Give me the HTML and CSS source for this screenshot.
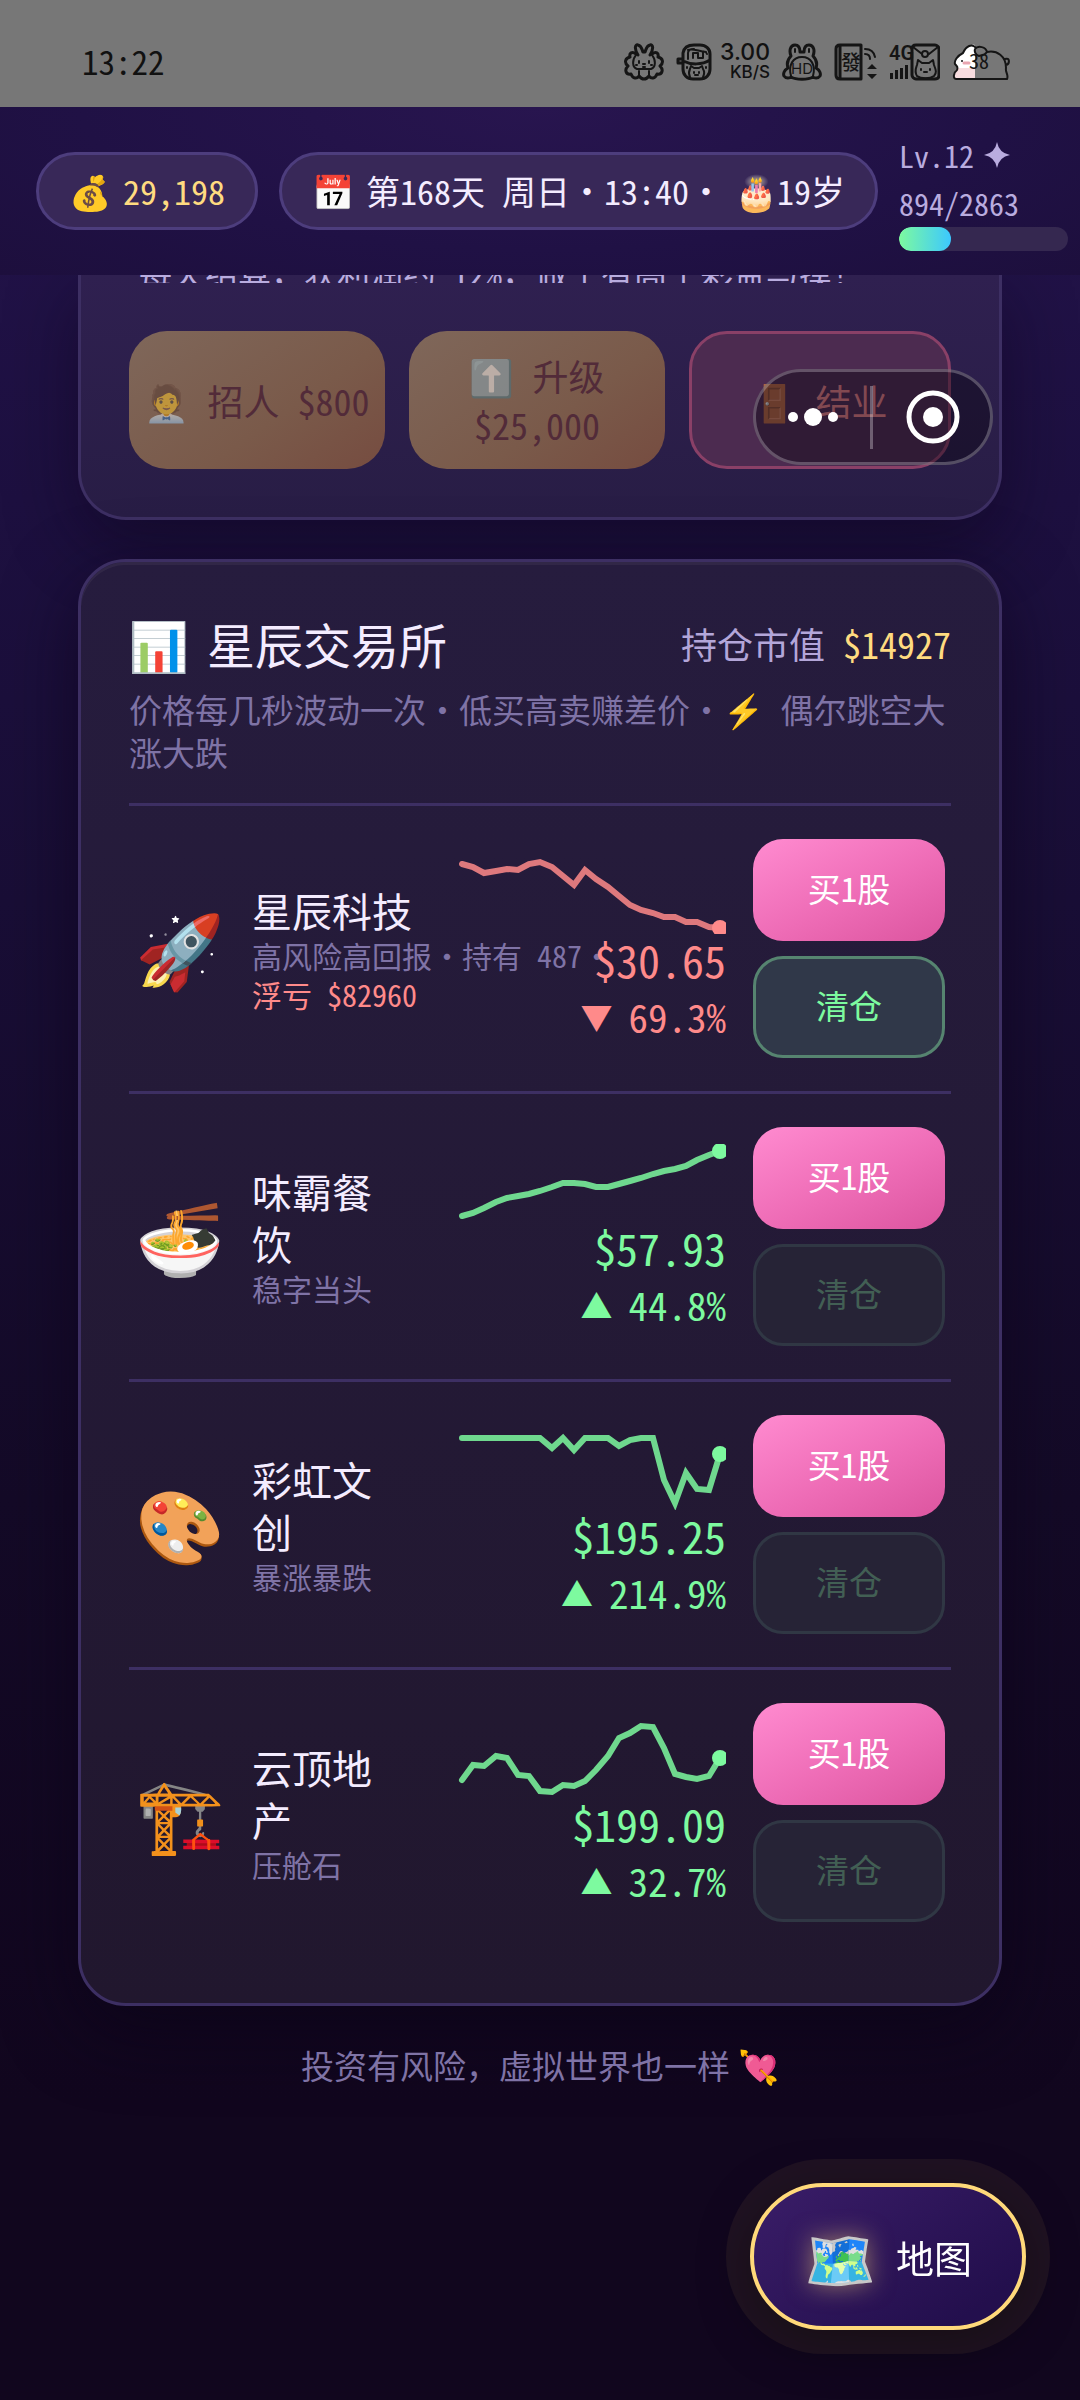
FILE: index.html
```html
<!DOCTYPE html>
<html lang="zh-CN">
<head>
<meta charset="utf-8">
<meta name="viewport" content="width=device-width, initial-scale=1">
<title>星辰交易所</title>
<link rel="stylesheet" href="styles.css">
</head>
<body>
<div class="status-bar">
  <time class="clock">13:22</time>
  <div class="status-icons">
    <svg width="40" height="38" viewBox="0 0 40 38" class="line-icon" aria-hidden="true">
      <path d="M12 11C8 8 5 10 6 14C1 15 0 20 4 23C0 27 2 32 7 31C9 36 13 36 15 33C18 37 22 37 25 33C27 36 31 36 33 31C38 32 40 27 36 23C40 20 39 15 34 14C35 10 32 8 28 11"/>
      <path d="M14 12C10 6 11 1 14 2C18 3 18 7 19 9H21C22 7 22 3 26 2C29 1 30 6 26 12"/>
      <path d="M12 12C8 17 8 24 13 26H27C32 24 32 17 28 12M15 28V33M25 28V33" class="thin"/>
      <path d="M15 18V20M25 18V20M19 21H21M12 22H13M27 22H28M19 24H21" class="thin"/>
    </svg>
    <svg width="36" height="38" viewBox="0 0 36 38" class="line-icon icon-gap" aria-hidden="true">
      <path d="M7 17V10C8 4 12 2 18 2H24C30 2 34 6 34 11V26C34 32 30 36 24 36H17C11 36 7 32 7 26V20M7 16H2V20H7M7 18C15 22 26 22 34 17"/>
      <path d="M12 16V10C12 7 15 6 18 6M17 15V10H22V15H27V10C26 8 30 8 31 11M12 7C16 5 22 8 30 9" class="thin"/>
      <path d="M14 34C12 30 13 28 14 26L15 23L18 25H23L26 23L27 26C29 29 28 32 27 34M18 29V30M23 29V30M11 24V25M30 24V25M19 32H22" class="thin"/>
    </svg>
    <div class="net-speed"><span>3.00</span><span>KB/S</span></div>
    <svg width="40" height="38" viewBox="0 0 40 38" class="line-icon icon-gap" aria-hidden="true">
      <path d="M9 13C7 8 8 2 13 2C17 2 18 6 18 9H22C22 6 23 2 27 2C32 2 33 8 31 13C35 17 35 22 34 25C38 27 39 31 38 33C36 36 32 35 31 34C26 37 14 37 9 34C8 35 4 36 2 33C1 31 2 27 6 25C5 22 5 17 9 13Z"/>
      <path d="M9 33C6 22 11 14 20 14S34 22 31 33M13 6V9M27 6V9" class="thin"/>
      <text x="20" y="31" text-anchor="middle" class="hd-text">HD</text>
    </svg>
    <svg width="44" height="38" viewBox="0 0 44 38" class="line-icon icon-gap-wide" aria-hidden="true">
      <path d="M6 2H27V36H6C3 36 2 34 2 32V6C2 4 3 2 6 2ZM6 2V36"/>
      <text x="17" y="27" text-anchor="middle" class="fa-text">發</text>
      <path d="M31 11C34 11 36 13 36 16M31 6C37 6 40 9 41 14" class="thin"/>
      <path d="M38 21L43 26H33ZM38 36L33 31H43Z" class="solid"/>
    </svg>
    <svg width="52" height="38" viewBox="0 0 52 38" class="line-icon icon-gap-small" aria-hidden="true">
      <text x="1" y="17" class="net-text">4G</text>
      <path d="M2 30H5V36H2ZM7 27H10V36H7ZM12 25H15V36H12ZM17 22H20V36H17Z" class="solid"/>
      <path d="M28 2H47C49 2 51 4 51 6V32C51 35 49 36 47 36H28C26 36 24 34 24 32V6C24 4 25 2 28 2Z"/>
      <path d="M25 4L34 11M50 4L41 11" class="thin"/>
      <circle cx="37" cy="11" r="3" class="thin"/>
      <path d="M29 33C26 28 28 25 29 22L30 17L34 20H41L45 17L46 22C48 27 49 30 46 33C42 36 33 36 29 33ZM33 26V27M42 26V27M36 29H39" class="thin"/>
    </svg>
    <svg width="58" height="38" viewBox="0 0 58 38" class="line-icon icon-gap-wide" aria-hidden="true">
      <path d="M23 2C18 1 14 4 11 10C5 13 2 18 3 21C5 23 6 24 5 27C1 30 1 36 4 36H23Z" fill="#fff" stroke="none"/>
      <path d="M5 25C2 29 1 33 3 36H23V25Z" fill="#f8dcdf" stroke="none"/>
      <path d="M24 5C20 0 14 3 11 10C5 13 2 18 3 21C5 23 6 24 5 27C1 30 1 36 4 36H55C57 32 53 29 54 25C54 13 45 7 35 9C34 4 26 2 23 6C22 9 24 12 27 13C31 12 33 12 35 9M53 16C58 14 58 21 54 22" class="thin"/>
      <circle cx="10" cy="18" r="1" class="solid"/>
      <path d="M12 20H17" stroke="#e9a5b0" fill="none"/>
      <text x="27" y="26" text-anchor="middle" class="battery-text">38</text>
    </svg>
  </div>
</div>

<header class="top-bar">
  <div class="pill pill-money"><span>💰</span><span>29,198</span></div>
  <div class="pill"><span>📅</span><span>第168天 周日·13:40·</span><span>🎂19岁</span></div>
  <div class="level">
    <span class="level-name">Lv.12
      <svg width="26" height="26" viewBox="0 0 26 26" aria-hidden="true"><path d="M13 0Q15 11 26 13Q15 15 13 26Q11 15 0 13Q11 11 13 0Z"/></svg>
    </span>
    <span>894/2863</span>
    <div class="xp"><div class="xp-fill" style="width: 31%"></div></div>
  </div>
</header>

<main class="content">
  <section class="card card-company">
    <p class="company-note">每天结算，获利润约 12%，做个有高个彩益与摸！</p>
    <div class="company-actions">
      <button type="button" class="btn-gold" disabled><span class="dimmed">🧑‍💼</span> 招人 $800</button>
      <button type="button" class="btn-gold" disabled><span class="dimmed">⬆️</span> 升级 $25,000</button>
      <button type="button" class="btn-close" disabled>🚪 结业</button>
    </div>
  </section>

  <section class="card card-market">
    <div class="market-head">
      <h1><span>📊</span><span>星辰交易所</span></h1>
      <p class="holding">持仓市值 <strong>$14927</strong></p>
    </div>
    <p class="market-note">价格每几秒波动一次·低买高卖赚差价·⚡ 偶尔跳空大涨大跌</p>

    <ul class="stocks">
      <li class="stock down">
        <span class="stock-icon">🚀</span>
        <div class="stock-info held">
          <h2>星辰科技</h2>
          <p>高风险高回报·持有 487·</p>
          <p class="loss">浮亏 $82960</p>
        </div>
        <div class="quote">
          <svg class="spark" viewBox="0 0 270 78" aria-hidden="true">
            <polyline points="6,8 17,11 28,17 40,15 51,13 62,14 73,8 84,6 96,11 107,20 118,29 129,14 140,23 152,31 163,40 174,49 185,54 197,57 208,61 219,61 230,66 241,66 253,71 264,72"/>
            <circle cx="264" cy="72" r="8"/>
          </svg>
          <span class="price">$30.65</span>
          <span class="change"><span class="arrow">▼</span>69.3%</span>
        </div>
        <div class="trade">
          <button type="button" class="buy">买1股</button>
          <button type="button" class="sell">清仓</button>
        </div>
      </li>
      <li class="stock up">
        <span class="stock-icon">🍜</span>
        <div class="stock-info">
          <h2>味霸餐饮</h2>
          <p>稳字当头</p>
        </div>
        <div class="quote">
          <svg class="spark" viewBox="0 0 270 78" aria-hidden="true">
            <polyline points="6,72 17,69 28,64 40,58 51,54 62,52 73,50 84,47 96,43 107,39 118,39 129,40 140,43 152,43 163,40 174,37 185,34 197,30 208,27 219,25 230,22 241,16 253,11 264,7"/>
            <circle cx="264" cy="7" r="8"/>
          </svg>
          <span class="price">$57.93</span>
          <span class="change"><span class="arrow">▲</span>44.8%</span>
        </div>
        <div class="trade">
          <button type="button" class="buy">买1股</button>
          <button type="button" class="sell" disabled>清仓</button>
        </div>
      </li>
      <li class="stock up">
        <span class="stock-icon">🎨</span>
        <div class="stock-info">
          <h2>彩虹文创</h2>
          <p>暴涨暴跌</p>
        </div>
        <div class="quote">
          <svg class="spark" viewBox="0 0 270 78" aria-hidden="true">
            <polyline points="6,6 84,6 96,16 107,6 118,18 129,6 152,6 163,14 174,8 185,6 197,6 208,48 219,71 230,41 241,57 253,58 264,22"/>
            <circle cx="264" cy="22" r="8"/>
          </svg>
          <span class="price">$195.25</span>
          <span class="change"><span class="arrow">▲</span>214.9%</span>
        </div>
        <div class="trade">
          <button type="button" class="buy">买1股</button>
          <button type="button" class="sell" disabled>清仓</button>
        </div>
      </li>
      <li class="stock up">
        <span class="stock-icon">🏗️</span>
        <div class="stock-info">
          <h2>云顶地产</h2>
          <p>压舱石</p>
        </div>
        <div class="quote">
          <svg class="spark" viewBox="0 0 270 78" aria-hidden="true">
            <polyline points="6,60 17,45 28,46 40,36 51,38 62,55 73,56 84,71 96,72 107,65 118,66 129,61 140,50 152,36 163,18 174,13 185,6 197,7 208,28 219,54 230,57 241,59 253,56 264,38"/>
            <circle cx="264" cy="38" r="8"/>
          </svg>
          <span class="price">$199.09</span>
          <span class="change"><span class="arrow">▲</span>32.7%</span>
        </div>
        <div class="trade">
          <button type="button" class="buy">买1股</button>
          <button type="button" class="sell" disabled>清仓</button>
        </div>
      </li>
    </ul>
  </section>

  <p class="disclaimer"><span>投资有风险，虚拟世界也一样</span><span>💘</span></p>
</main>

<div class="capsule">
  <button type="button" class="capsule-btn" aria-label="更多">
    <svg width="50" height="20" viewBox="0 0 50 20"><circle cx="5" cy="10" r="5"/><circle cx="25" cy="10" r="9"/><circle cx="45" cy="10" r="5"/></svg>
  </button>
  <button type="button" class="capsule-btn" aria-label="关闭">
    <svg width="54" height="54" viewBox="0 0 54 54"><circle cx="27" cy="27" r="24" class="ring"/><circle cx="27" cy="27" r="10"/></svg>
  </button>
</div>

<button type="button" class="map-btn"><span class="map-icon">🗺️</span><span>地图</span></button>
</body>
</html>
```
FILE: styles.css
```css
* {
  box-sizing: border-box;
}

body {
  position: relative;
  margin: 0;
  min-height: 100vh;
  color: #f4ecff;
  background: linear-gradient(#25144e 0, #1d1040 500px, #190e36 900px, #140a27 1500px, #11061e 2100px);
  font-family: "Noto Sans Mono CJK SC", "Noto Sans CJK SC", sans-serif;
  font-size: 34px;
  line-height: 1.3;
}

h1,
h2,
p,
ul {
  margin: 0;
  padding: 0;
  font-weight: 400;
}

button {
  margin: 0;
  padding: 0;
  border: 0;
  color: inherit;
  font: inherit;
}

/* System status bar */
.status-bar {
  display: flex;
  justify-content: space-between;
  align-items: center;
  height: 107px;
  padding: 16px 70px 0 82px;
  background: #777;
  color: #111;
}

.clock {
  font-size: 33px;
}

.status-icons {
  display: flex;
  align-items: center;
}

.line-icon {
  flex: none;
  fill: none;
  stroke: #151515;
  stroke-width: 3;
  stroke-linejoin: round;
  stroke-linecap: round;
}

.line-icon text,
.line-icon .solid {
  fill: #151515;
  stroke: none;
}

.line-icon .thin {
  stroke-width: 2;
}

.icon-gap {
  margin-left: 12px;
}

.icon-gap-small {
  margin-left: 10px;
}

.icon-gap-wide {
  margin-left: 12px;
}

.hd-text {
  font: 15px Inter, sans-serif;
}

.fa-text {
  font: 500 20px "Noto Sans CJK TC", sans-serif;
}

.net-text {
  font: 600 20px Roboto, sans-serif;
}

.battery-text {
  font: 20px "Noto Sans Mono CJK SC", sans-serif;
}

.net-speed {
  display: flex;
  flex-direction: column;
  align-items: flex-end;
  margin-left: 8px;
  font: 500 23px/20px Inter, sans-serif;
}

.net-speed span:last-child {
  font-size: 17px;
}

/* Player bar */
.top-bar {
  position: relative;
  z-index: 1;
  display: flex;
  align-items: center;
  height: 168px;
  padding: 0 12px 0 36px;
  background: radial-gradient(ellipse at 50% 0, #28154f, #201145 60%, #1d0f3d);
}

.pill {
  display: flex;
  gap: 12px;
  flex: none;
  margin-right: 21px;
  padding: 0 30px;
  border: 3px solid #4d3d7d;
  border-radius: 39px;
  background: #382858;
  line-height: 72px;
  white-space: nowrap;
}

.pill-money span:last-child {
  color: #ffdb80;
}

.level {
  display: flex;
  flex-direction: column;
  flex: 1;
  color: #b9acdf;
  font-size: 30px;
  line-height: 48px;
  white-space: nowrap;
}

.level-name {
  display: flex;
  align-items: center;
  gap: 10px;
}

.level-name svg {
  fill: currentColor;
}

.xp {
  height: 24px;
  border-radius: 12px;
  background: #352850;
  overflow: hidden;
}

.xp-fill {
  height: 100%;
  border-radius: 12px;
  background: linear-gradient(90deg, #7dfa9f, #3cc8ff);
}

/* Cards */
.content {
  padding: 0 78px 60px;
}

.card {
  padding: 48px;
  border: 3px solid #3d2f63;
  border-radius: 48px;
  box-shadow: 0 24px 72px #0a041673;
}

.card-company {
  padding-top: 0;
  border-top: 0;
  border-radius: 0 0 48px 48px;
  background: linear-gradient(#2f2050, #281d45);
}

.company-note {
  display: flex;
  align-items: flex-end;
  height: 8px;
  margin: 0 10px 48px;
  overflow: hidden;
  color: #b9acdf;
  font-size: 33px;
  line-height: 21px;
  white-space: nowrap;
}

.company-actions {
  display: flex;
  gap: 24px;
}

.company-actions button {
  flex: 1;
  min-height: 138px;
  padding: 0 12px;
  border-radius: 38px;
  font-size: 36px;
  line-height: 49px;
}

.company-actions .btn-gold {
  color: #522b39;
  background: linear-gradient(145deg, #7f675a, #7a5a4a 60%, #764c40);
}

.company-actions .btn-close {
  border: 3px solid #8a4067;
  color: #d97a80;
  background: #4c2b50;
}

.dimmed {
  opacity: .5;
}

.card-market {
  margin-top: 39px;
  background: linear-gradient(#261c3e, #21172e);
  box-shadow: inset 0 3px #ffffff0d, 0 24px 72px #0a041699;
}

.market-head {
  display: flex;
  justify-content: space-between;
  align-items: center;
  height: 66px;
  margin-bottom: 12px;
}

.market-head h1 {
  display: flex;
  gap: 18px;
  font-size: 48px;
  font-weight: 500;
  line-height: 60px;
}

.holding {
  color: #b3a6d9;
  font-size: 36px;
}

.holding strong {
  color: #ffdb80;
  font-weight: 500;
}

.market-note {
  margin-bottom: 29px;
  color: #7f73a6;
  font-size: 33px;
  line-height: 43px;
}

.stocks {
  list-style: none;
}

.stock {
  display: flex;
  align-items: center;
  padding: 33px 6px;
  border-top: 3px solid #3d2f63;
}

.stock-icon {
  display: flex;
  flex: none;
  justify-content: center;
  width: 90px;
  margin-right: 27px;
  padding-bottom: 6px;
  font-size: 72px;
  line-height: 90px;
}

.stock-info {
  flex: 1;
  min-width: 0;
  padding-right: 50px;
}

.stock-info.held {
  white-space: nowrap;
}

.stock-info h2 {
  font-size: 40px;
  font-weight: 500;
  line-height: 52px;
}

.stock-info p {
  color: #7f73a6;
  font-size: 30px;
  line-height: 39px;
}

.stock-info .loss {
  color: #ff8a8a;
}

.quote {
  display: flex;
  flex-direction: column;
  align-self: flex-start;
  flex: none;
  width: 270px;
  margin: 17px 27px 0 0;
  text-align: right;
}

.down .quote {
  color: #ff8a8a;
}

.up .quote {
  color: #7dfa9f;
}

.spark {
  width: 100%;
  height: 78px;
  fill: currentColor;
}

.spark polyline {
  fill: none;
  stroke: currentColor;
  stroke-width: 6;
  stroke-linecap: round;
  opacity: .85;
}

.price {
  font-size: 44px;
  line-height: 50px;
}

.change {
  display: flex;
  align-items: center;
  justify-content: flex-end;
  gap: 16px;
  font-size: 39px;
  line-height: 64px;
}

.arrow {
  font-size: 32px;
}

.trade {
  display: flex;
  flex-direction: column;
  flex: none;
  gap: 15px;
  width: 192px;
}

.trade button {
  height: 102px;
  padding-bottom: 4px;
  border-radius: 30px;
  font-size: 33px;
  font-weight: 500;
}

.trade .buy {
  color: #fff;
  background: linear-gradient(155deg, #ff8bd0, #ee6cb6 55%, #dc559f);
}

.trade .sell {
  border: 3px solid #568470;
  color: #7dfa9f;
  background: #303849;
}

.trade .sell:disabled {
  border-color: #303744;
  color: #425f54;
  background: #262336;
}

.disclaimer {
  display: flex;
  justify-content: center;
  gap: 8px;
  margin-top: 37px;
  color: #7f73a6;
  font-size: 33px;
  line-height: 44px;
}

/* Floating controls */
.capsule {
  position: absolute;
  z-index: 2;
  top: 369px;
  right: 87px;
  display: flex;
  width: 240px;
  height: 96px;
  border: 3px solid #ffffff40;
  border-radius: 48px;
  background: #0a04106b;
}

.capsule-btn {
  display: flex;
  flex: 1;
  align-items: center;
  justify-content: center;
  background: none;
}

.capsule-btn:first-child {
  flex: 0 0 114px;
}

.capsule-btn + .capsule-btn {
  justify-content: flex-start;
}

.capsule-btn + .capsule-btn::before {
  content: "";
  width: 3px;
  height: 63px;
  margin-right: 33px;
  background: #ffffff4d;
}

.capsule-btn svg {
  fill: #fff;
}

.capsule-btn .ring {
  fill: none;
  stroke: #fff;
  stroke-width: 5;
}

.map-btn {
  position: fixed;
  right: 54px;
  bottom: 70px;
  display: flex;
  align-items: center;
  gap: 20px;
  height: 147px;
  padding: 0 50px;
  border: 4px solid #ffd97a;
  border-radius: 74px;
  color: #fff;
  background: linear-gradient(145deg, #3a1d68, #230f4d 85%);
  box-shadow: 0 0 0 24px #ffc8640f, 0 12px 48px #00000080;
  font-size: 38px;
  font-weight: 500;
}

.map-icon {
  font-size: 58px;
  text-shadow: 0 0 24px #ffd97a80;
}
```
